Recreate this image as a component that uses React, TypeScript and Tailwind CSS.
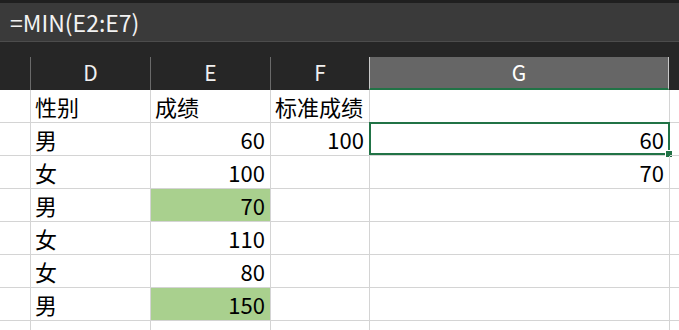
const font = "font-['Noto_Sans_CJK_SC','Noto_Sans',sans-serif]";

const cols = ['w-[31px]', 'w-[120px]', 'w-[120px]', 'w-[99px]', 'w-[300px]', 'flex-1'];

type Cell = { text?: string; align?: 'left' | 'right'; fill?: boolean };

const rows: Cell[][] = [
  [{}, { text: '性别' }, { text: '成绩' }, { text: '标准成绩' }, {}, {}],
  [{}, { text: '男' }, { text: '60', align: 'right' }, { text: '100', align: 'right' }, { text: '60', align: 'right' }, {}],
  [{}, { text: '女' }, { text: '100', align: 'right' }, {}, { text: '70', align: 'right' }, {}],
  [{}, { text: '男' }, { text: '70', align: 'right', fill: true }, {}, {}, {}],
  [{}, { text: '女' }, { text: '110', align: 'right' }, {}, {}, {}],
  [{}, { text: '女' }, { text: '80', align: 'right' }, {}, {}, {}],
  [{}, { text: '男' }, { text: '150', align: 'right', fill: true }, {}, {}, {}],
  [{}, {}, {}, {}, {}, {}],
];

export default function App() {
  return (
    <div className={`w-[679px] h-[330px] overflow-hidden bg-white ${font}`}>
      {/* top strip */}
      <div className="h-[3px] bg-[#1f1f1f]" />

      {/* formula bar */}
      <div className="h-[39px] bg-[#3a3a3a] border-b border-[#4c4c4c] flex items-center pl-[10px] text-[23px] text-[#f2f2f2] leading-none">
        =MIN(E2:E7)
      </div>

      {/* column headers */}
      <div className="bg-[#262626] pt-[15px] flex h-[48px]">
        <div className={`${cols[0]} border-r border-[#6a6a6a]`} />
        {['D', 'E', 'F'].map((c, i) => (
          <div
            key={c}
            className={`${cols[i + 1]} border-r border-[#6a6a6a] flex items-center justify-center text-[21px] text-[#f0f0f0] leading-none pb-[2px]`}
          >
            {c}
          </div>
        ))}
        <div className={`${cols[4]} -ml-px bg-[#666666] border-x border-[#c8c8c8] border-b-2 border-b-[#217346] flex items-center justify-center text-[21px] text-white leading-none`}>
          G
        </div>
        <div className="flex-1" />
      </div>

      {/* grid */}
      {rows.map((row, r) => (
        <div key={r} className="flex h-[33px]">
          {row.map((cell, c) => (
            <div
              key={c}
              className={`${cols[c]} relative border-b border-r border-[#d4d4d4] flex items-center text-[22px] text-black leading-none ${
                cell.align === 'right' ? 'justify-end pr-[5px]' : 'pl-[4px]'
              } ${cell.fill ? 'bg-[#a9d08e]' : ''} ${c === 5 ? 'border-r-0' : ''}`}
            >
              {cell.text}
              {r === 1 && c === 4 && (
                <>
                  <div className="absolute -left-px -top-px right-[-1px] bottom-0 border-2 border-[#217346] pointer-events-none" />
                  <div className="absolute right-[-4px] bottom-[-3px] w-[6px] h-[6px] bg-[#217346] border border-white box-content" />
                </>
              )}
            </div>
          ))}
        </div>
      ))}
    </div>
  );
}
